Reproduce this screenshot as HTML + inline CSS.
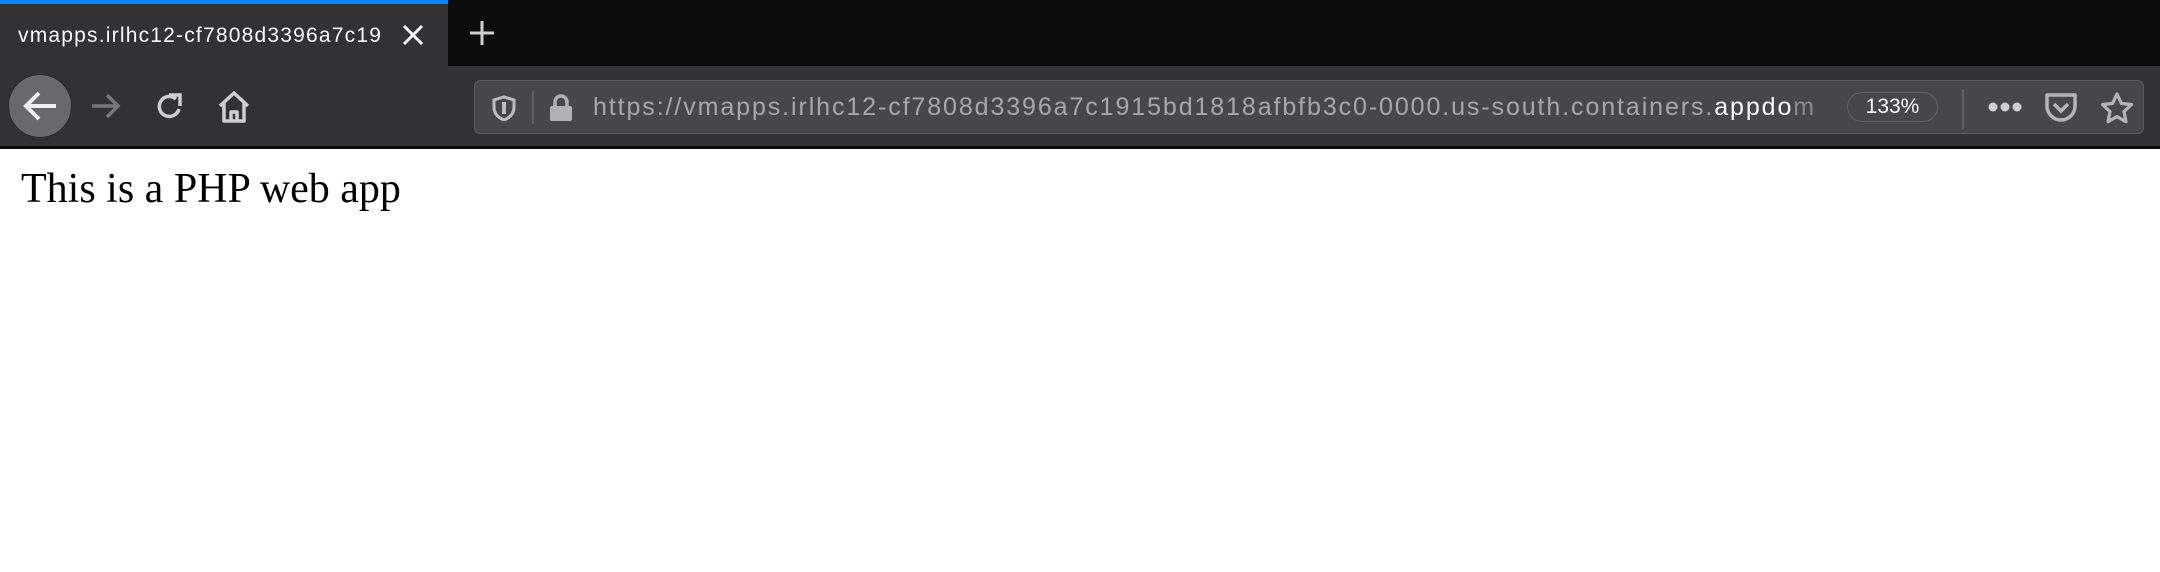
<!DOCTYPE html>
<html><head><meta charset="utf-8"><style>
*{margin:0;padding:0;box-sizing:border-box}
body{width:2160px;height:572px;background:#fff;overflow:hidden;position:relative;font-family:"Liberation Sans",sans-serif}
.tabbar{position:absolute;left:0;top:0;width:2160px;height:66px;background:#0c0c0d}
.tab{position:absolute;left:0;top:0;width:448px;height:66px;background:#323234;border-top:4px solid #0a84ff}
.tabtxt{position:absolute;left:18px;top:20px;font-size:21px;letter-spacing:1.2px;color:#f9f9fa;white-space:nowrap;width:372px;overflow:hidden}
.tb{position:absolute;left:0;top:66px;width:2160px;height:80px;background:#323234}
.line{position:absolute;left:0;top:146px;width:2160px;height:3px;background:#0c0c0d}
.url{position:absolute;left:474px;top:14px;width:1670px;height:54px;background:#474749;border:1px solid #5a5a5c;border-radius:6px}
.utxt{position:absolute;left:118px;top:12px;font-size:25px;letter-spacing:1.9px;color:#a8a8aa;white-space:nowrap;width:1245px;overflow:hidden}
.pill{position:absolute;left:1372px;top:11px;width:91px;height:30px;border:1.5px solid #606062;border-radius:15px;color:#f9f9fa;font-size:21px;text-align:center;line-height:27px}
.page{position:absolute;left:21px;top:165px;font-family:"Liberation Serif",serif;font-size:42px;color:#000}
</style></head><body>
<div class="tabbar">
 <div class="tab"><div class="tabtxt">vmapps.irlhc12-cf7808d3396a7c19</div>
 <svg style="position:absolute;left:402px;top:20px" width="22" height="22"><path d="M2 2L20 20M20 2L2 20" stroke="#f9f9fa" stroke-width="3"/></svg></div>
 <svg style="position:absolute;left:468px;top:19px" width="28" height="28"><path d="M14 2V26M2 14H26" stroke="#d0d0d2" stroke-width="3"/></svg>
</div>
<div class="tb">
 <div style="position:absolute;left:8px;top:8px;width:64px;height:64px;border-radius:50%;background:#69696b;border:1px solid #2a2a2c"></div>
 <svg style="position:absolute;left:22px;top:24px" width="36" height="32"><path d="M34 16H4M17 3L4 16L17 29" stroke="#f0f0f0" stroke-width="4" fill="none"/></svg>
 <svg style="position:absolute;left:90px;top:26px" width="32" height="28"><path d="M2 14H28M17 3L28 14L17 25" stroke="#77777a" stroke-width="3.5" fill="none"/></svg>
 <svg style="position:absolute;left:154px;top:25px" width="32" height="32"><path d="M25 18A10 10 0 1 1 22 8" stroke="#cfcfd1" stroke-width="3.5" fill="none"/><path d="M15 4H26V15" stroke="#cfcfd1" stroke-width="3.5" fill="none"/></svg>
 <svg style="position:absolute;left:216px;top:23px" width="36" height="36"><path d="M4 17L18 4L32 17M8 14V32H28V14M15 32V23H21V32" stroke="#cfcfd1" stroke-width="3.5" fill="none" stroke-linejoin="round"/></svg>
 <div class="url">
  <svg style="position:absolute;left:17px;top:14px" width="24" height="26"><path d="M12 2L22 5V12C22 19 17 23 12 25C7 23 2 19 2 12V5Z" stroke="#bdbdbf" stroke-width="3" fill="none"/><path d="M12 7V19" stroke="#bdbdbf" stroke-width="4"/></svg>
  <div style="position:absolute;left:57px;top:10px;width:2px;height:33px;background:#5e5e62"></div>
  <svg style="position:absolute;left:73px;top:12px" width="26" height="30"><path d="M7 13V9A6 6 0 0 1 19 9V13" stroke="#b1b1b3" stroke-width="3.5" fill="none"/><rect x="2" y="13" width="22" height="15" rx="2" fill="#b1b1b3"/></svg>
  <div class="utxt">https://vmapps.irlhc12-cf7808d3396a7c1915bd1818afbfb3c0-0000.us-south.containers.<span style="color:#f9f9fa">appdo</span><span style="color:#8a8a8c">m</span></div>
  <div class="pill">133%</div>
  <div style="position:absolute;left:1487px;top:8px;width:2px;height:40px;background:#5e5e62"></div>
  <svg style="position:absolute;left:1512px;top:20px" width="36" height="12"><circle cx="6" cy="6" r="4.5" fill="#cfcfd1"/><circle cx="18" cy="6" r="4.5" fill="#cfcfd1"/><circle cx="30" cy="6" r="4.5" fill="#cfcfd1"/></svg>
  <svg style="position:absolute;left:1569px;top:11px" width="34" height="32"><path d="M3 3H31V14A14 14 0 0 1 3 14Z" stroke="#b5b5b7" stroke-width="3.5" fill="none" stroke-linejoin="round"/><path d="M10 12L17 19L24 12" stroke="#b5b5b7" stroke-width="3.5" fill="none"/></svg>
  <svg style="position:absolute;left:1624px;top:10px" width="36" height="34"><path d="M18 3L22.4 12.4L32.5 13.6L25 20.6L27 30.7L18 25.6L9 30.7L11 20.6L3.5 13.6L13.6 12.4Z" stroke="#b5b5b7" stroke-width="3.2" fill="none" stroke-linejoin="round"/></svg>
 </div>
</div>
<div class="line"></div>
<div class="page">This is a PHP web app</div>
</body></html>
